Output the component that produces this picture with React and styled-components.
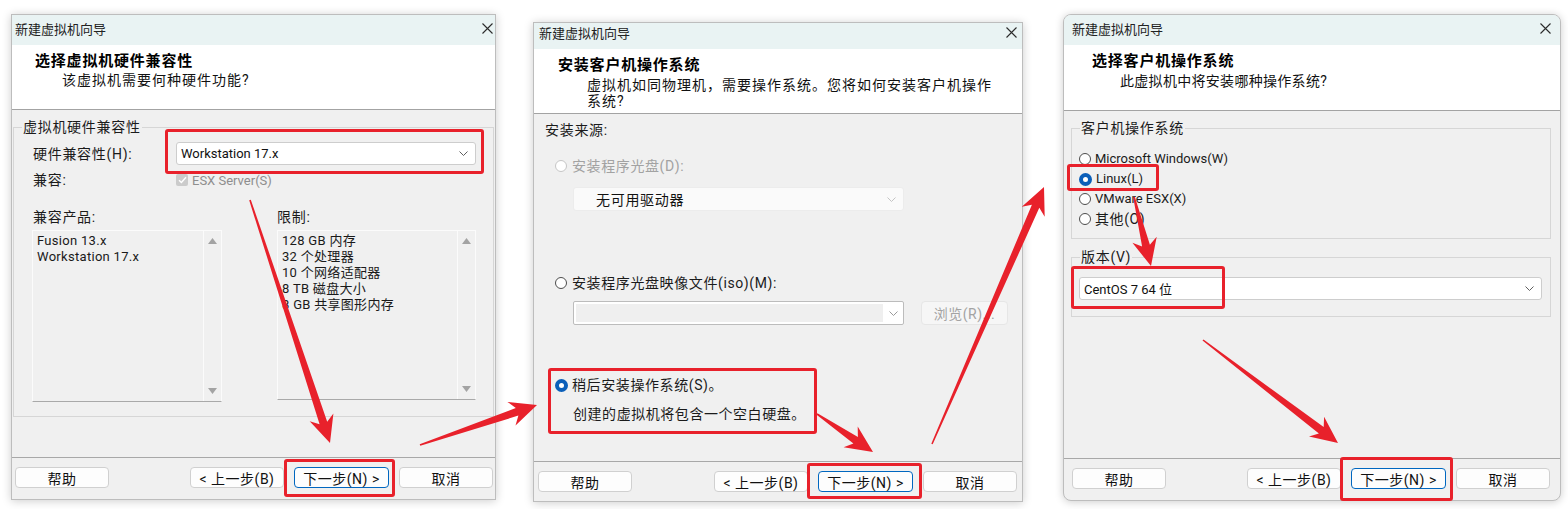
import React from 'react';
import styled, { createGlobalStyle, css } from 'styled-components';

const GlobalStyle = createGlobalStyle`
  html, body { margin: 0; background: #fff; }
  body {
    font-family: Roboto, "Noto Sans CJK SC", sans-serif;
    color: #1b1b1b;
  }
`;

const RED = '#e8212b';

const Page = styled.div`
  position: relative;
  width: 1568px;
  height: 509px;
  box-sizing: border-box;
  padding-left: 11px;
  display: flex;
  align-items: flex-start;
  overflow: hidden;
`;

const Window = styled.div`
  flex: none;
  width: ${p => p.$w}px;
  height: ${p => p.$h}px;
  margin-top: ${p => p.$top}px;
  margin-left: ${p => p.$ml || 0}px;
  box-sizing: border-box;
  border: 1px solid #bdbdbd;
  border-radius: ${p => (p.$round ? 8 : 0)}px;
  overflow: hidden;
  background: #f0f0f0;
  box-shadow: 0 1px 9px rgba(0, 0, 0, 0.2);
  display: flex;
  flex-direction: column;
`;

const TitleBar = styled.div`
  flex: none;
  height: ${p => p.$h}px;
  box-sizing: border-box;
  padding: 0 ${p => p.$pr}px ${p => p.$pb || 0}px ${p => p.$pl}px;
  background: #e9f3f3;
  display: flex;
  align-items: center;
  justify-content: space-between;
  font-size: 13px;
  color: #222;
`;

const Header = styled.div`
  flex: none;
  height: ${p => p.$h}px;
  box-sizing: border-box;
  background: #fff;
  border-bottom: 1px solid #a3a3a3;
  padding: 6px 0 0 ${p => p.$pl}px;
`;

const HeadTitle = styled.div`
  font-size: 15px;
  font-weight: 700;
  line-height: 20px;
  letter-spacing: 0.8px;
  color: #000;
`;

const HeadText = styled.div`
  margin: ${p => p.$mt}px 0 0 ${p => p.$indent}px;
  font-size: 14px;
  line-height: 16px;
  letter-spacing: ${p => p.$ls}px;
  color: #111;
`;

const Body = styled.div`
  flex: 1;
  min-height: 0;
  box-sizing: border-box;
  padding: ${p => p.$p || '0'};
  display: flex;
  flex-direction: column;
  align-items: flex-start;
`;

const Group = styled.fieldset`
  align-self: stretch;
  margin: ${p => p.$m};
  padding: 0;
  min-width: 0;
  border: 1px solid #d6d6d6;
`;

const Legend = styled.legend`
  margin-left: 8px;
  padding: 0 1px;
  font-size: 14px;
  line-height: 20px;
  letter-spacing: 0.7px;
  color: #1b1b1b;
`;

const GroupInner = styled.div`
  padding: ${p => p.$p};
`;

const Label = styled.span`
  font-size: 14px;
  line-height: 20px;
  letter-spacing: 0.7px;
  white-space: nowrap;
  color: ${p => (p.$muted ? '#9a9a9a' : '#1b1b1b')};
`;

const FormRow = styled.div`
  display: grid;
  grid-template-columns: ${p => p.$cols};
  align-items: center;
  height: ${p => p.$h}px;
  margin-top: ${p => p.$mt || 0}px;
`;

const Select = styled.div`
  flex: none;
  width: ${p => p.$w}px;
  height: ${p => p.$h}px;
  margin: ${p => p.$mt || 0}px 0 0 ${p => p.$ml || 0}px;
  box-sizing: border-box;
  display: flex;
  align-items: center;
  justify-content: space-between;
  padding: 0 7px 0 ${p => p.$pl || 4}px;
  border: 1px solid ${p => (p.$flat ? '#ececec' : '#cdcdcd')};
  border-radius: 3px;
  background: ${p => (p.$flat ? '#fafafa' : '#fff')};
  font-size: ${p => (p.$cjk ? 14 : 13)}px;
  letter-spacing: ${p => (p.$cjk ? 0.7 : 0)}px;
  color: #111;
`;

const CheckRow = styled.div`
  display: flex;
  align-items: center;
  gap: 4px;
  font-size: 13px;
  color: #8e8e8e;
`;

const CheckBox = styled.span`
  width: 12px;
  height: 12px;
  border-radius: 2px;
  background: #cbcbcb;
  display: flex;
  align-items: center;
  justify-content: center;
`;

const ListGrid = styled.div`
  display: grid;
  grid-template-columns: 190px 199px;
  column-gap: 55px;
  align-items: start;
  margin: 3px 0 0 -1px;
`;

const ListBox = styled.div`
  height: ${p => p.$h}px;
  box-sizing: border-box;
  display: flex;
  border: 1px solid #fbfbfb;
  border-bottom-color: #a9a9a9;
  background: #f0f0f0;
`;

const ListItems = styled.div`
  flex: 1;
  padding: 2px 4px;
  font-size: 13px;
  line-height: 16px;
  letter-spacing: 0.3px;
  color: #1a1a1a;
  white-space: nowrap;
`;

const ScrollTrack = styled.div`
  flex: none;
  width: 17px;
  border-left: 1px solid #fbfbfb;
  display: flex;
  flex-direction: column;
  justify-content: space-between;
  align-items: center;
  padding: 7px 0;
`;

const OptionRow = styled.div`
  display: flex;
  align-items: center;
  gap: ${p => p.$gap || 5}px;
  height: 20px;
  margin: ${p => p.$mt || 0}px 0 0 ${p => p.$ml || 0}px;
`;

const RadioDot = styled.span`
  flex: none;
  width: 12px;
  height: 12px;
  box-sizing: border-box;
  border-radius: 50%;
  background: #fff;
  border: 1px solid ${p => (p.$disabled ? '#c6c6c6' : '#4d4d4d')};
  ${p =>
    p.$checked &&
    css`
      width: 13px;
      height: 13px;
      border: 4px solid #0b5fb9;
    `}
`;

const OptionText = styled.span`
  font-size: ${p => (p.$latin ? 13 : 14)}px;
  line-height: 20px;
  letter-spacing: ${p => (p.$latin ? 0 : 0.6)}px;
  white-space: nowrap;
  color: ${p => (p.$disabled ? '#a2a2a2' : '#1b1b1b')};
`;

const Note = styled.div`
  margin: 9px 0 0 28px;
  font-size: 14px;
  line-height: 20px;
  letter-spacing: 0.55px;
`;

const ComboRow = styled.div`
  display: flex;
  align-items: center;
  gap: 17px;
  margin: 8px 0 0 28px;
`;

const Combo = styled.div`
  width: 331px;
  height: 24px;
  box-sizing: border-box;
  border: 1px solid #bcbcbc;
  border-radius: 2px;
  background: #fff;
  padding: 2px 0 2px 2px;
  display: flex;
`;

const ComboField = styled.div`
  flex: 1;
  background: #efefef;
`;

const ComboArrow = styled.div`
  width: 20px;
  display: flex;
  align-items: center;
  justify-content: center;
`;

const FlatButton = styled.div`
  width: 87px;
  height: 24px;
  box-sizing: border-box;
  border: 1px solid #e6e6e6;
  border-radius: 4px;
  background: #f6f6f6;
  color: #a3a3a3;
  font-size: 14px;
  letter-spacing: 0.5px;
  display: flex;
  align-items: center;
  justify-content: center;
`;

const Footer = styled.div`
  flex: none;
  height: ${p => p.$h}px;
  box-sizing: border-box;
  border-top: 1px solid #a8a8a8;
  padding: ${p => p.$pt || 10}px ${p => p.$pr}px 0 ${p => p.$pl}px;
  display: flex;
  align-items: flex-start;
  justify-content: space-between;
`;

const ButtonGroup = styled.div`
  display: flex;
  gap: 10px;
`;

const Button = styled.div`
  width: ${p => (p.$primary ? 95 : 94)}px;
  height: 21px;
  box-sizing: border-box;
  border: 1px solid ${p => (p.$primary ? '#0067c0' : '#d0d0d0')};
  border-radius: 4px;
  background: #fdfdfd;
  font-size: 14px;
  letter-spacing: 0.5px;
  color: #111;
  display: flex;
  align-items: center;
  justify-content: center;
  white-space: nowrap;
`;

const Overlay = styled.svg`
  position: absolute;
  left: 0;
  top: 0;
  pointer-events: none;
`;

const CloseIcon = () => (
  <svg width="11" height="11" viewBox="0 0 11 11">
    <path d="M.5.5l10 10M10.5.5l-10 10" stroke="#2b2b2b" strokeWidth="1.1" />
  </svg>
);

const Chevron = ({ color = '#5f5f5f' }) => (
  <svg width="9" height="5" viewBox="0 0 9 5">
    <path d="M.5.5 4.5 4.5 8.5.5" fill="none" stroke={color} strokeWidth="1" />
  </svg>
);

const Tri = ({ down }) => (
  <svg width="9" height="6" viewBox="0 0 9 6">
    <path d={down ? 'M0 0h9L4.5 6z' : 'M0 6h9L4.5 0z'} fill="#a3a3a3" />
  </svg>
);

const Tick = () => (
  <svg width="9" height="8" viewBox="0 0 9 8">
    <path d="M1 4.2 3.4 6.5 8 1.3" fill="none" stroke="#fff" strokeWidth="1.4" />
  </svg>
);

function WizardFooter({ h, pl, pr, pt }) {
  return (
    <Footer $h={h} $pl={pl} $pr={pr} $pt={pt}>
      <Button>帮助</Button>
      <ButtonGroup>
        <Button>&lt; 上一步(B)</Button>
        <Button $primary>下一步(N) &gt;</Button>
        <Button>取消</Button>
      </ButtonGroup>
    </Footer>
  );
}

function Title({ h, pl, pr, pb }) {
  return (
    <TitleBar $h={h} $pl={pl} $pr={pr} $pb={pb}>
      <span>新建虚拟机向导</span>
      <CloseIcon />
    </TitleBar>
  );
}

function arrow(x1, y1, x2, y2, len = 27, head = 25, shaft = 8, tail = 1.6) {
  const L = Math.hypot(x2 - x1, y2 - y1);
  const ux = (x2 - x1) / L;
  const uy = (y2 - y1) / L;
  const nx = -uy;
  const ny = ux;
  const at = (a, w) => `${(x2 - ux * a + nx * w).toFixed(1)},${(y2 - uy * a + ny * w).toFixed(1)}`;
  const tl = (w) => `${(x1 + nx * w).toFixed(1)},${(y1 + ny * w).toFixed(1)}`;
  return [
    tl(tail / 2),
    at(len - 6, shaft / 2),
    at(len, head / 2),
    `${x2},${y2}`,
    at(len, -head / 2),
    at(len - 6, -shaft / 2),
    tl(-tail / 2),
  ].join(' ');
}

const boxes = [
  [166.5, 130.5, 316, 42],
  [285.5, 460.5, 108, 35],
  [549.5, 369.5, 266, 63],
  [808.5, 464.5, 112, 33],
  [1068.5, 165.5, 89, 24],
  [1072.5, 267.5, 151, 40],
  [1341.5, 458.5, 110, 41],
];

const arrows = [
  [250, 200, 330, 443],
  [420, 445, 537, 405],
  [817, 414, 873, 452],
  [932, 444, 1044, 187],
  [1134, 197, 1151, 266],
  [1203, 340, 1338, 443],
];

function Annotations() {
  return (
    <Overlay width="1568" height="509" viewBox="0 0 1568 509">
      {boxes.map(([x, y, w, h], i) => (
        <rect key={i} x={x} y={y} width={w} height={h} rx="1.5" fill="none" stroke={RED} strokeWidth="3" />
      ))}
      {arrows.map((a, i) => (
        <polygon key={i} points={arrow(...a)} fill={RED} />
      ))}
    </Overlay>
  );
}

function HardwareStep() {
  return (
    <Window $w={485} $h={486} $top={14}>
      <Title h={30} pl={3} pr={2} pb={3} />
      <Header $h={65} $pl={23}>
        <HeadTitle>选择虚拟机硬件兼容性</HeadTitle>
        <HeadText $mt={1} $indent={27} $ls={1}>该虚拟机需要何种硬件功能?</HeadText>
      </Header>
      <Body>
        <Group $m="7px 1px 0 1px">
          <Legend>虚拟机硬件兼容性</Legend>
          <GroupInner $p="5px 16px 14px 19px">
            <FormRow $cols="143px 300px" $h={23}>
              <Label>硬件兼容性(H):</Label>
              <Select $w={300} $h={23}>
                <span>Workstation 17.x</span>
                <Chevron />
              </Select>
            </FormRow>
            <FormRow $cols="143px 300px" $h={20} $mt={5}>
              <Label>兼容:</Label>
              <CheckRow>
                <CheckBox><Tick /></CheckBox>
                <span>ESX Server(S)</span>
              </CheckRow>
            </FormRow>
            <FormRow $cols="244px 1fr" $h={20} $mt={17}>
              <Label>兼容产品:</Label>
              <Label>限制:</Label>
            </FormRow>
            <ListGrid>
              <ListBox $h={172}>
                <ListItems>
                  <div>Fusion 13.x</div>
                  <div>Workstation 17.x</div>
                </ListItems>
                <ScrollTrack><Tri /><Tri down /></ScrollTrack>
              </ListBox>
              <ListBox $h={170}>
                <ListItems>
                  <div>128 GB 内存</div>
                  <div>32 个处理器</div>
                  <div>10 个网络适配器</div>
                  <div>8 TB 磁盘大小</div>
                  <div>8 GB 共享图形内存</div>
                </ListItems>
                <ScrollTrack><Tri /><Tri down /></ScrollTrack>
              </ListBox>
            </ListGrid>
          </GroupInner>
        </Group>
      </Body>
      <WizardFooter h={42} pl={3} pr={2} pt={9} />
    </Window>
  );
}

function InstallSourceStep() {
  return (
    <Window $w={490} $h={480} $top={22} $ml={37}>
      <Title h={26} pl={5} pr={5} pb={7} />
      <Header $h={65} $pl={24}>
        <HeadTitle>安装客户机操作系统</HeadTitle>
        <HeadText $mt={2} $indent={29} $ls={1}>
          虚拟机如同物理机，需要操作系统。您将如何安装客户机操作
          <br />
          系统?
        </HeadText>
      </Header>
      <Body $p="6px 0 0 11px">
        <Label>安装来源:</Label>
        <OptionRow $mt={16} $ml={10}>
          <RadioDot $disabled />
          <OptionText $disabled>安装程序光盘(D):</OptionText>
        </OptionRow>
        <Select $w={331} $h={24} $ml={28} $mt={11} $pl={22} $flat $cjk>
          <span>无可用驱动器</span>
          <Chevron color="#c4c4c4" />
        </Select>
        <OptionRow $mt={62} $ml={10}>
          <RadioDot />
          <OptionText>安装程序光盘映像文件(iso)(M):</OptionText>
        </OptionRow>
        <ComboRow>
          <Combo>
            <ComboField />
            <ComboArrow><Chevron color="#9a9a9a" /></ComboArrow>
          </Combo>
          <FlatButton>浏览(R)...</FlatButton>
        </ComboRow>
        <OptionRow $mt={50} $ml={10} $gap={4}>
          <RadioDot $checked />
          <OptionText>稍后安装操作系统(S)。</OptionText>
        </OptionRow>
        <Note>创建的虚拟机将包含一个空白硬盘。</Note>
      </Body>
      <WizardFooter h={40} pl={4} pr={5} pt={9} />
    </Window>
  );
}

const guests = [
  { label: 'Microsoft Windows(W)' },
  { label: 'Linux(L)', checked: true },
  { label: 'VMware ESX(X)' },
  { label: '其他(O)', cjk: true },
];

function GuestOsStep() {
  return (
    <Window $w={498} $h={487} $top={14} $ml={40} $round>
      <Title h={30} pl={8} pr={9} pb={3} />
      <Header $h={66} $pl={28}>
        <HeadTitle>选择客户机操作系统</HeadTitle>
        <HeadText $mt={2} $indent={28} $ls={0.3}>此虚拟机中将安装哪种操作系统?</HeadText>
      </Header>
      <Body>
        <Group $m="7px 9px 0 7px">
          <Legend>客户机操作系统</Legend>
          <GroupInner $p="11px 0 9px 7px">
            {guests.map(g => (
              <OptionRow key={g.label} $gap={4}>
                <RadioDot $checked={g.checked} />
                <OptionText $latin={!g.cjk}>{g.label}</OptionText>
              </OptionRow>
            ))}
          </GroupInner>
        </Group>
        <Group $m="8px 9px 0 7px">
          <Legend>版本(V)</Legend>
          <GroupInner $p="10px 7px 16px 7px">
            <Select $w={463} $h={23}>
              <span>CentOS 7 64 位</span>
              <Chevron />
            </Select>
          </GroupInner>
        </Group>
      </Body>
      <WizardFooter h={42} pl={8} pr={10} pt={9} />
    </Window>
  );
}

export default function App() {
  return (
    <>
      <GlobalStyle />
      <Page>
        <HardwareStep />
        <InstallSourceStep />
        <GuestOsStep />
        <Annotations />
      </Page>
    </>
  );
}
